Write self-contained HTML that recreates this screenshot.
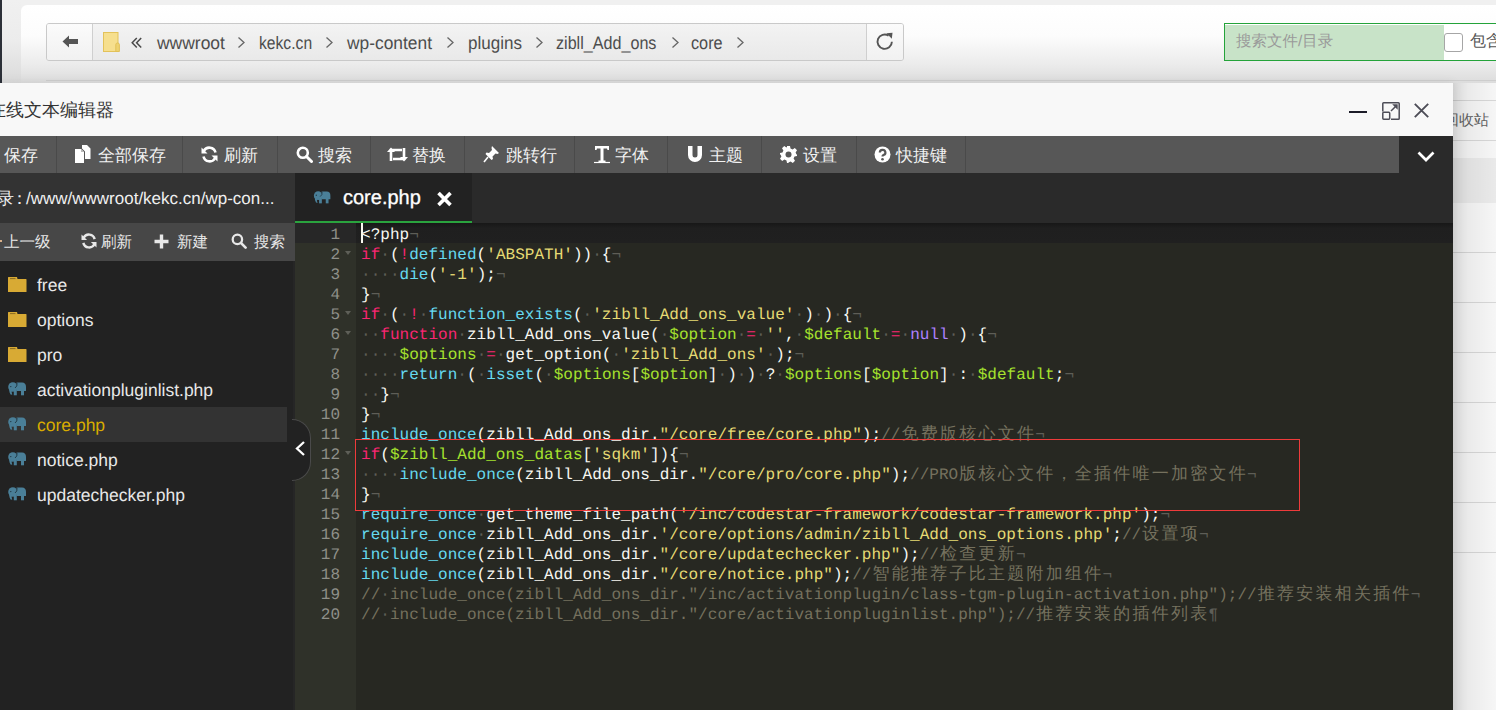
<!DOCTYPE html>
<html><head><meta charset="utf-8">
<style>
*{margin:0;padding:0;box-sizing:border-box}
html,body{width:1496px;height:710px;overflow:hidden;background:#f0f0f0;font-family:"Liberation Sans",sans-serif;position:relative;text-rendering:geometricPrecision}
.abs{position:absolute}
j{display:inline-block;width:1em;text-align:center}
/* page */
#lstrip{left:0;top:0;width:2px;height:83px;background:#2c3038}
#hdr{left:21px;top:5px;width:1500px;height:78px;background:linear-gradient(#fff 0%,#fcfcfc 40%,#ececec 75%,#dcdcdc 100%);border-top-left-radius:6px}
#hline{left:46px;top:80px;width:1500px;height:1px;background:#cdcdcd}
#pgl{left:2px;top:0;width:19px;height:83px;background:linear-gradient(#f0f0f0 0%,#ececec 50%,#dadada 100%)}
#addr{left:46px;top:23px;width:858px;height:38px;border:1px solid #c9c9c9;border-radius:3px;background:linear-gradient(#f3f3f3,#e9e9e9);overflow:hidden}
#back{left:0;top:0;width:46px;height:36px;background:linear-gradient(#fbfbfb,#f1f1f1);border-right:1px solid #cfcfcf}
#refr{right:0;top:0;width:37px;height:36px;background:linear-gradient(#fbfbfb,#f1f1f1);border-left:1px solid #cfcfcf}
.bc{position:absolute;top:8px;font-size:18px;color:#4d4d4d;line-height:20px;white-space:nowrap}
.gt{position:absolute;top:10px;width:7px;height:16px}
#search{left:1224px;top:23px;width:300px;height:38px;border:1px solid #24a33a;background:#fff}
#sfill{left:0;top:1px;width:219px;height:35px;background:#c8e3c8}
#sph{left:11px;top:8px;font-size:15.5px;color:#9a9a9a;line-height:20px}
#chk{left:219px;top:9px;width:19px;height:19px;border:1px solid #a6a6a6;border-radius:3px;background:#fff}
#chkl{left:245px;top:8px;font-size:16px;color:#555;line-height:20px}
/* right page */
#rpage{left:1453px;top:83px;width:60px;height:640px;background:#fcfcfc}
.rl{position:absolute;left:0;width:60px;height:1px;background:#dcdcdc}
#dlg{left:-20px;top:83px;width:1473px;height:640px;background:#f8f8f8;box-shadow:0 0 10px rgba(0,0,0,.08)}
#title{left:8px;top:99px;font-size:18px;color:#333;line-height:22px;white-space:nowrap}
#tb{left:0;top:136px;width:1399px;height:37px;background:#575757}
#tbr{left:1399px;top:136px;width:54px;height:37px;background:#2a2a2a}
.sep{position:absolute;top:0;width:1px;height:37px;background:#4a4a4a}
.tbi{position:absolute;top:8px;font-size:17px;line-height:20px;color:#f2f2f2;white-space:nowrap}
#lp{left:0;top:173px;width:295px;height:540px;background:#222}
#path{left:0;top:173px;width:295px;height:50px;background:#333}
#sub{left:0;top:223px;width:295px;height:38px;background:#474747}
#lsep{left:293px;top:261px;width:2px;height:540px;background:#262626}
#tabs{left:295px;top:173px;width:1158px;height:50px;background:#2a2a2a}
#tab{left:295px;top:173px;width:177px;height:50px;background:#222;border-bottom:2px solid #2aa33e}
#ed{left:295px;top:223px;width:1158px;height:490px;background:#272822}
#gut{left:295px;top:223px;width:61px;height:490px;background:#2f3129}
#actg{left:295px;top:223px;width:61px;height:20px;background:#272727}
#actl{left:356px;top:223px;width:1097px;height:20px;background:linear-gradient(#171717,#1f1f1f 5px,#202020)}
#code{left:361px;top:223px;font-family:"Liberation Mono",monospace;font-size:16px;letter-spacing:0.03px;line-height:20px;color:#f8f8f2;white-space:pre}
.ln{height:20px;padding-top:2px}
#gutn{left:295px;top:223px;width:45px;font-family:"Liberation Mono",monospace;font-size:16px;line-height:20px;color:#8f908a;text-align:right}
.gn{height:20px;padding-top:2px;position:relative}
.gn u{position:absolute;left:50px;top:8px;width:0;height:0;border-left:3.5px solid transparent;border-right:3.5px solid transparent;border-top:4.5px solid #5e5f58}
#code i{font-style:normal;color:#5e5e57}
#code .k{color:#f92672}
#code .f{color:#66d9ef}
#code .s{color:#e6db74}
#code .v{color:#a6e22e}
#code .c{color:#ae81ff}
#code .m{color:#75715e}
#code .m i{color:#5e5e57}
.cj{display:inline-block;width:19.26px;text-align:center;font-weight:normal;font-size:17px;line-height:18px}
#cursor{left:361px;top:223px;width:2px;height:20px;background:#f8f8f0}
#redbox{left:355px;top:439px;width:945px;height:72px;border:1px solid #ee3b3b}
.file{position:absolute;left:37px;font-size:17.5px;color:#e8e8e8;line-height:20px;white-space:nowrap}
</style></head><body>
<div id="lstrip" class="abs"></div>
<div id="pgl" class="abs"></div><div id="hdr" class="abs"></div><div id="hline" class="abs"></div>
<div id="addr" class="abs">
  <div id="back" class="abs"></div>
  <div id="refr" class="abs"></div>
</div>
<!-- back arrow -->
<svg class="abs" style="left:62px;top:34px" width="17" height="15" viewBox="0 0 17 15"><path d="M0.5 7.5 L7 1.5 L7 5 L16 5 L16 10 L7 10 L7 13.5 Z" fill="#555"/></svg>
<!-- folder -->
<svg class="abs" style="left:103px;top:32px" width="18" height="21" viewBox="0 0 18 21"><rect x="0.5" y="0.5" width="14.5" height="19" fill="#f6df8e" stroke="#e3c25a"/><path d="M12.8 19.5 V12.6 Q12.8 11 14.6 11 Q16.4 11 16.4 12.6 V19.5 Z" fill="#eed271" stroke="#e0be52" stroke-width="0.9"/></svg>
<svg class="abs" style="left:131px;top:37px" width="12" height="12" viewBox="0 0 12 12"><path d="M5.8 1 L1.2 5.8 L5.8 10.6 M10.2 1 L5.6 5.8 L10.2 10.6" fill="none" stroke="#4a4a4a" stroke-width="1.5"/></svg>
<div class="bc" style="left:157px;top:33px;transform:scaleX(.97);transform-origin:0 0">wwwroot</div>
<div class="bc" style="left:259px;top:33px;transform:scaleX(.87);transform-origin:0 0">kekc.cn</div>
<div class="bc" style="left:347px;top:33px;transform:scaleX(.965);transform-origin:0 0">wp-content</div>
<div class="bc" style="left:468px;top:33px;transform:scaleX(.946);transform-origin:0 0">plugins</div>
<div class="bc" style="left:556px;top:33px;transform:scaleX(.896);transform-origin:0 0">zibll_Add_ons</div>
<div class="bc" style="left:691px;top:33px;transform:scaleX(.902);transform-origin:0 0">core</div>
<svg class="abs" style="left:237px;top:36px" width="9" height="13"><path d="M1.5 1.5 L7 6.5 L1.5 11.5" fill="none" stroke="#666" stroke-width="1.3"/></svg>
<svg class="abs" style="left:325px;top:36px" width="9" height="13"><path d="M1.5 1.5 L7 6.5 L1.5 11.5" fill="none" stroke="#666" stroke-width="1.3"/></svg>
<svg class="abs" style="left:446px;top:36px" width="9" height="13"><path d="M1.5 1.5 L7 6.5 L1.5 11.5" fill="none" stroke="#666" stroke-width="1.3"/></svg>
<svg class="abs" style="left:535px;top:36px" width="9" height="13"><path d="M1.5 1.5 L7 6.5 L1.5 11.5" fill="none" stroke="#666" stroke-width="1.3"/></svg>
<svg class="abs" style="left:671px;top:36px" width="9" height="13"><path d="M1.5 1.5 L7 6.5 L1.5 11.5" fill="none" stroke="#666" stroke-width="1.3"/></svg>
<svg class="abs" style="left:736px;top:36px" width="9" height="13"><path d="M1.5 1.5 L7 6.5 L1.5 11.5" fill="none" stroke="#666" stroke-width="1.3"/></svg>
<!-- refresh icon -->
<svg class="abs" style="left:875px;top:32px" width="20" height="20" viewBox="0 0 20 20"><path d="M16.9 9.8 A7.2 7.2 0 1 1 13.6 3.6" fill="none" stroke="#555" stroke-width="1.9"/><path d="M11.5 1.2 L17.5 0.8 L16.8 6.8 Z" fill="#555"/></svg>
<div id="search" class="abs">
  <div id="sfill" class="abs"></div>
  <div id="sph" class="abs"><j>搜</j><j>索</j><j>文</j><j>件</j>/<j>目</j><j>录</j></div>
  <div id="chk" class="abs"></div>
  <div id="chkl" class="abs"><j>包</j><j>含</j></div>
</div>

<div id="rpage" class="abs">
  <div class="rl" style="top:17px"></div>
  <div class="rl" style="top:57px"></div>
  <div class="abs" style="left:0;top:75px;width:60px;height:45px;background:#efefef"></div>
  <div class="rl" style="top:169px"></div>
  <div class="rl" style="top:219px"></div>
  <div class="rl" style="top:269px"></div>
  <div class="rl" style="top:319px"></div>
  <div class="rl" style="top:369px"></div>
  <div class="rl" style="top:419px"></div>
  <div class="rl" style="top:469px"></div>
  <div class="abs" style="left:-9px;top:28px;font-size:15px;color:#666;line-height:20px;white-space:nowrap"><j>回</j><j>收</j><j>站</j></div>
</div>
<div class="abs" style="left:1453px;top:83px;width:50px;height:640px;background:linear-gradient(90deg,rgba(0,0,0,.15),rgba(0,0,0,.07) 30%,rgba(0,0,0,.01))"></div>

<div id="dlg" class="abs"></div>
<div id="title" class="abs" style="left:-12px"><j>在</j><j>线</j><j>文</j><j>本</j><j>编</j><j>辑</j><j>器</j></div>
<!-- window controls -->
<div class="abs" style="left:1349px;top:111px;width:18px;height:2px;background:#1c1c28"></div>
<svg class="abs" style="left:1381px;top:101px" width="20" height="20" viewBox="0 0 20 20"><path d="M1.8 10.5 V2.6 Q1.8 1.8 2.6 1.8 H17.4 Q18.2 1.8 18.2 2.6 V17.4 Q18.2 18.2 17.4 18.2 H10" fill="none" stroke="#4d4d57" stroke-width="1.5"/><rect x="1.8" y="11.3" width="6.9" height="6.9" rx="0.9" fill="none" stroke="#4d4d57" stroke-width="1.5"/><path d="M10 10 L14.8 5.2" stroke="#4d4d57" stroke-width="1.5"/><path d="M11.2 3.3 H16.7 V8.8 Z" fill="#4d4d57"/></svg>
<svg class="abs" style="left:1413px;top:102px" width="17" height="17" viewBox="0 0 17 17"><path d="M1.8 1.8 L15.2 15.2 M15.2 1.8 L1.8 15.2" stroke="#4d4d57" stroke-width="1.9"/></svg>

<div id="tb" class="abs">
  <div class="sep" style="left:56px"></div>
  <div class="sep" style="left:182px"></div>
  <div class="sep" style="left:277px"></div>
  <div class="sep" style="left:370px"></div>
  <div class="sep" style="left:464px"></div>
  <div class="sep" style="left:574px"></div>
  <div class="sep" style="left:667px"></div>
  <div class="sep" style="left:761px"></div>
  <div class="sep" style="left:856px"></div>
  <div class="sep" style="left:965px"></div>
</div>
<div id="tbr" class="abs"></div>
<svg class="abs" style="left:1416px;top:150px" width="20" height="14" viewBox="0 0 20 14"><path d="M2.5 2.5 L10 10 L17.5 2.5" fill="none" stroke="#fff" stroke-width="2.7"/></svg>
<!-- toolbar labels -->
<div class="tbi" style="left:4px;top:146px"><j>保</j><j>存</j></div>
<div class="tbi" style="left:98px;top:146px"><j>全</j><j>部</j><j>保</j><j>存</j></div>
<div class="tbi" style="left:224px;top:146px"><j>刷</j><j>新</j></div>
<div class="tbi" style="left:318px;top:146px"><j>搜</j><j>索</j></div>
<div class="tbi" style="left:412px;top:146px"><j>替</j><j>换</j></div>
<div class="tbi" style="left:506px;top:146px"><j>跳</j><j>转</j><j>行</j></div>
<div class="tbi" style="left:615px;top:146px"><j>字</j><j>体</j></div>
<div class="tbi" style="left:709px;top:146px"><j>主</j><j>题</j></div>
<div class="tbi" style="left:803px;top:146px"><j>设</j><j>置</j></div>
<div class="tbi" style="left:896px;top:146px"><j>快</j><j>捷</j><j>键</j></div>
<!-- toolbar icons -->
<svg class="abs" style="left:75px;top:145px" width="16" height="19" viewBox="0 0 16 19"><path d="M0 4 H6 L9 7 V18 H0 Z" fill="#fff"/><path d="M6 4 L6 7 L9 7" fill="#bbb"/><path d="M7 0 H12 L15.5 3.5 V14 H10 V6.5 L7 3.5 Z" fill="#fff"/></svg>
<svg class="abs" style="left:201px;top:146px" width="17" height="17" viewBox="0 0 17 17"><path d="M14.5 6.5 A6.3 6.3 0 0 0 2.8 5" fill="none" stroke="#fff" stroke-width="2.6"/><path d="M0.5 1.5 L0.5 7.5 L6.5 7.5 Z" fill="#fff"/><path d="M2.5 10.5 A6.3 6.3 0 0 0 14.2 12" fill="none" stroke="#fff" stroke-width="2.6"/><path d="M16.5 15.5 L16.5 9.5 L10.5 9.5 Z" fill="#fff"/></svg>
<svg class="abs" style="left:296px;top:146px" width="17" height="17" viewBox="0 0 17 17"><circle cx="6.8" cy="6.8" r="5" fill="none" stroke="#fff" stroke-width="2.6"/><path d="M10.5 10.5 L15.5 15.5" stroke="#fff" stroke-width="3" stroke-linecap="round"/></svg>
<svg class="abs" style="left:387px;top:147px" width="21" height="15" viewBox="0 0 21 15"><path d="M4 14 V3 H15" fill="none" stroke="#fff" stroke-width="2.6"/><path d="M0 5 L4 0.5 L8 5 Z" fill="#fff"/><path d="M17 1 V12 H6" fill="none" stroke="#fff" stroke-width="2.6"/><path d="M13 10 L17 14.5 L21 10 Z" fill="#fff"/></svg>
<svg class="abs" style="left:483px;top:145px" width="17" height="18" viewBox="0 0 17 18"><path d="M9 1 L16 8 L14.5 9 L12.5 8.5 L9.5 11.5 L10 14 L8.5 15 L2.5 9 L3.5 7.5 L6 8 L9 5 L8.5 3 Z" fill="#fff"/><path d="M5 12 L1 17" stroke="#fff" stroke-width="1.6"/></svg>
<svg class="abs" style="left:594px;top:145px" width="16" height="19" viewBox="0 0 16 19"><path d="M1 1 H15 V5 H13.5 L13 3.5 H9.5 V15.5 H11.5 V17.5 H4.5 V15.5 H6.5 V3.5 H3 L2.5 5 H1 Z" fill="#fff"/><path d="M0 17.5 H16" stroke="#fff" stroke-width="1.2"/></svg>
<svg class="abs" style="left:687px;top:146px" width="16" height="17" viewBox="0 0 16 17"><path d="M1 0 H5.5 V9 A2.5 2.5 0 0 0 10.5 9 V0 H15 V9 A7 7 0 0 1 1 9 Z" fill="#fff"/><rect x="1" y="0" width="4.5" height="3.5" fill="#575757" opacity="0"/></svg>
<svg class="abs" style="left:780px;top:146px" width="17" height="17" viewBox="0 0 17 17"><path d="M7 0 H10 L10.5 2.5 L12.6 3.4 L14.8 2 L17 4.2 L15.6 6.4 L16.5 8.5 L17 8.5 V10 L14.5 10.5 L13.6 12.6 L15 14.8 L12.8 17 L10.6 15.6 L8.5 16.5 V17 H7 L6.5 14.5 L4.4 13.6 L2.2 15 L0 12.8 L1.4 10.6 L0.5 8.5 L0 8.5 V7 L2.5 6.5 L3.4 4.4 L2 2.2 L4.2 0 L6.4 1.4 L7 1 Z" fill="#fff"/><circle cx="8.5" cy="8.5" r="3" fill="#575757"/></svg>
<svg class="abs" style="left:874px;top:146px" width="17" height="17" viewBox="0 0 17 17"><circle cx="8.5" cy="8.5" r="8" fill="#fff"/><path d="M5.8 6.5 A2.8 2.6 0 1 1 9.5 9 Q8.5 9.5 8.5 10.5" fill="none" stroke="#575757" stroke-width="2.2"/><circle cx="8.5" cy="13.2" r="1.3" fill="#575757"/></svg>

<!-- left panel -->
<div id="lp" class="abs"></div>
<div id="path" class="abs"></div>
<div class="abs" style="left:-3px;top:188px;font-size:17px;color:#f0f0f0;line-height:22px;white-space:nowrap"><j>录</j><span style="margin:0 -2px 0 -3px"><j>：</j></span>/www/wwwroot/kekc.cn/wp-con...</div>
<div id="sub" class="abs"></div>
<div class="abs" style="left:4px;top:233px;font-size:15.5px;color:#e8e8e8;line-height:20px;white-space:nowrap"><j>上</j><j>一</j><j>级</j></div>
<div class="abs" style="left:101px;top:233px;font-size:15.5px;color:#e8e8e8;line-height:20px;white-space:nowrap"><j>刷</j><j>新</j></div>
<div class="abs" style="left:177px;top:233px;font-size:15.5px;color:#e8e8e8;line-height:20px;white-space:nowrap"><j>新</j><j>建</j></div>
<div class="abs" style="left:254px;top:233px;font-size:15.5px;color:#e8e8e8;line-height:20px;white-space:nowrap"><j>搜</j><j>索</j></div>
<svg class="abs" style="left:81px;top:233px" width="16" height="16" viewBox="0 0 17 17"><path d="M14.5 6.5 A6.3 6.3 0 0 0 2.8 5" fill="none" stroke="#e8e8e8" stroke-width="2.6"/><path d="M0.5 1.5 L0.5 7.5 L6.5 7.5 Z" fill="#e8e8e8"/><path d="M2.5 10.5 A6.3 6.3 0 0 0 14.2 12" fill="none" stroke="#e8e8e8" stroke-width="2.6"/><path d="M16.5 15.5 L16.5 9.5 L10.5 9.5 Z" fill="#e8e8e8"/></svg>
<svg class="abs" style="left:154px;top:234px" width="15" height="15" viewBox="0 0 15 15"><path d="M7.5 0.5 V14.5 M0.5 7.5 H14.5" stroke="#e8e8e8" stroke-width="3.4"/></svg>
<svg class="abs" style="left:231px;top:233px" width="16" height="16" viewBox="0 0 17 17"><circle cx="6.8" cy="6.8" r="5" fill="none" stroke="#e8e8e8" stroke-width="2.4"/><path d="M10.5 10.5 L15.5 15.5" stroke="#e8e8e8" stroke-width="2.8" stroke-linecap="round"/></svg>
<div class="abs" style="left:0;top:240px;width:2px;height:2px;background:#d8b08a"></div>

<div class="abs" style="left:0;top:407px;width:287px;height:35px;background:#333"></div>
<div class="file" style="top:275px">free</div>
<div class="file" style="top:310px">options</div>
<div class="file" style="top:345px">pro</div>
<div class="file" style="top:380px">activationpluginlist.php</div>
<div class="file" style="top:415px;color:#d9ac00">core.php</div>
<div class="file" style="top:450px">notice.php</div>
<div class="file" style="top:485px">updatechecker.php</div>
<!-- folder icons -->
<svg class="abs" style="left:8px;top:277px" width="19" height="15" viewBox="0 0 19 15"><path d="M0 0.5 Q0 0 0.5 0 H9 L9.5 2 H18 Q18.5 2 18.5 2.5 V15 H0 Z" fill="#d8aa34"/><path d="M2 1.6 H7.5" stroke="#8a6a20" stroke-width="1"/></svg>
<svg class="abs" style="left:8px;top:312px" width="19" height="15" viewBox="0 0 19 15"><path d="M0 0.5 Q0 0 0.5 0 H9 L9.5 2 H18 Q18.5 2 18.5 2.5 V15 H0 Z" fill="#d8aa34"/><path d="M2 1.6 H7.5" stroke="#8a6a20" stroke-width="1"/></svg>
<svg class="abs" style="left:8px;top:347px" width="19" height="15" viewBox="0 0 19 15"><path d="M0 0.5 Q0 0 0.5 0 H9 L9.5 2 H18 Q18.5 2 18.5 2.5 V15 H0 Z" fill="#d8aa34"/><path d="M2 1.6 H7.5" stroke="#8a6a20" stroke-width="1"/></svg>
<!-- elephants -->
<svg class="abs eleph" style="left:8px;top:382px" width="19" height="14" viewBox="0 0 19 14"><use href="#el"/></svg>
<svg class="abs eleph" style="left:8px;top:417px" width="19" height="14" viewBox="0 0 19 14"><use href="#el"/></svg>
<svg class="abs eleph" style="left:8px;top:452px" width="19" height="14" viewBox="0 0 19 14"><use href="#el"/></svg>
<svg class="abs eleph" style="left:8px;top:487px" width="19" height="14" viewBox="0 0 19 14"><use href="#el"/></svg>
<svg width="0" height="0" style="position:absolute"><defs><g id="el"><ellipse cx="4.8" cy="5" rx="4.6" ry="4.8" fill="#4a7f98"/><path d="M8.6 0.6 H14 Q18 0.8 18 5 V8.5 Q18 9 17.5 9 H8.5 Z" fill="#4a7f98"/><rect x="5.8" y="6" width="3" height="7.3" fill="#4a7f98"/><rect x="13" y="6" width="3" height="7.3" fill="#4a7f98"/><path d="M1.2 6.5 Q1 10 2.5 12.5 L4.2 12.8 Q3.2 10.5 3.8 8" fill="#4a7f98"/><path d="M9 0.8 Q9.6 4.5 7 6" fill="none" stroke="#1f3440" stroke-width="0.9"/><circle cx="2.8" cy="4.6" r="0.7" fill="#1f3440"/></g></defs></svg>
<div id="lsep" class="abs"></div>

<!-- tabs -->
<div id="tabs" class="abs"></div>
<div id="tab" class="abs"></div>
<svg class="abs eleph" style="left:313px;top:191px" width="19" height="13" viewBox="0 0 19 14"><use href="#el"/></svg>
<div class="abs" style="left:343px;top:186px;font-size:20px;color:#fff;line-height:24px;white-space:nowrap;-webkit-text-stroke:0.3px #fff">core.php</div>
<svg class="abs" style="left:436px;top:191px" width="17" height="16" viewBox="0 0 17 16"><path d="M2.5 2 L14.5 14 M14.5 2 L2.5 14" stroke="#fff" stroke-width="3.6"/></svg>

<!-- editor -->
<div id="ed" class="abs"></div>
<div id="gut" class="abs"></div>
<div id="actg" class="abs"></div>
<div id="actl" class="abs"></div>
<div id="gutn" class="abs"><div class="gn">1</div><div class="gn">2<u></u></div><div class="gn">3</div><div class="gn">4</div><div class="gn">5<u></u></div><div class="gn">6<u></u></div><div class="gn">7</div><div class="gn">8</div><div class="gn">9</div><div class="gn">10</div><div class="gn">11</div><div class="gn">12<u></u></div><div class="gn">13</div><div class="gn">14</div><div class="gn">15</div><div class="gn">16</div><div class="gn">17</div><div class="gn">18</div><div class="gn">19</div><div class="gn">20</div></div>
<div id="code" class="abs"><div class="ln">&lt;?php<i>¬</i></div><div class="ln"><span class="k">if</span><i>·</i>(<span class="k">!</span><span class="f">defined</span>(<span class="s">'ABSPATH'</span>))<i>·</i>{<i>¬</i></div><div class="ln"><i>·</i><i>·</i><i>·</i><i>·</i><span class="f">die</span>(<span class="s">'-1'</span>);<i>¬</i></div><div class="ln">}<i>¬</i></div><div class="ln"><span class="k">if</span><i>·</i>(<i>·</i><span class="k">!</span><i>·</i><span class="f">function_exists</span>(<i>·</i><span class="s">'zibll_Add_ons_value'</span><i>·</i>)<i>·</i>)<i>·</i>{<i>¬</i></div><div class="ln"><i>·</i><i>·</i><span class="k">function</span><i>·</i>zibll_Add_ons_value(<i>·</i><span class="v">$option</span><i>·</i><span class="k">=</span><i>·</i><span class="s">''</span>,<i>·</i><span class="v">$default</span><i>·</i><span class="k">=</span><i>·</i><span class="c">null</span><i>·</i>)<i>·</i>{<i>¬</i></div><div class="ln"><i>·</i><i>·</i><i>·</i><i>·</i><span class="v">$options</span><i>·</i><span class="k">=</span><i>·</i>get_option(<i>·</i><span class="s">'zibll_Add_ons'</span><i>·</i>);<i>¬</i></div><div class="ln"><i>·</i><i>·</i><i>·</i><i>·</i><span class="f">return</span><i>·</i>(<i>·</i><span class="f">isset</span>(<i>·</i><span class="v">$options</span>[<span class="v">$option</span>]<i>·</i>)<i>·</i>)<i>·</i>?<i>·</i><span class="v">$options</span>[<span class="v">$option</span>]<i>·</i>:<i>·</i><span class="v">$default</span>;<i>¬</i></div><div class="ln"><i>·</i><i>·</i>}<i>¬</i></div><div class="ln">}<i>¬</i></div><div class="ln"><span class="f">include_once</span>(zibll_Add_ons_dir.<span class="s">"/core/free/core.php"</span>);<span class="m">//<b class="cj">免</b><b class="cj">费</b><b class="cj">版</b><b class="cj">核</b><b class="cj">心</b><b class="cj">文</b><b class="cj">件</b></span><i>¬</i></div><div class="ln"><span class="k">if</span>(<span class="v">$zibll_Add_ons_datas</span>[<span class="s">'sqkm'</span>]){<i>¬</i></div><div class="ln"><i>·</i><i>·</i><i>·</i><i>·</i><span class="f">include_once</span>(zibll_Add_ons_dir.<span class="s">"/core/pro/core.php"</span>);<span class="m">//PRO<b class="cj">版</b><b class="cj">核</b><b class="cj">心</b><b class="cj">文</b><b class="cj">件</b><b class="cj">，</b><b class="cj">全</b><b class="cj">插</b><b class="cj">件</b><b class="cj">唯</b><b class="cj">一</b><b class="cj">加</b><b class="cj">密</b><b class="cj">文</b><b class="cj">件</b></span><i>¬</i></div><div class="ln">}<i>¬</i></div><div class="ln"><span class="f">require_once</span><i>·</i>get_theme_file_path(<span class="s">'/inc/codestar-framework/codestar-framework.php'</span>);<i>¬</i></div><div class="ln"><span class="f">require_once</span><i>·</i>zibll_Add_ons_dir.<span class="s">'/core/options/admin/zibll_Add_ons_options.php'</span>;<span class="m">//<b class="cj">设</b><b class="cj">置</b><b class="cj">项</b></span><i>¬</i></div><div class="ln"><span class="f">include_once</span>(zibll_Add_ons_dir.<span class="s">"/core/updatechecker.php"</span>);<span class="m">//<b class="cj">检</b><b class="cj">查</b><b class="cj">更</b><b class="cj">新</b></span><i>¬</i></div><div class="ln"><span class="f">include_once</span>(zibll_Add_ons_dir.<span class="s">"/core/notice.php"</span>);<span class="m">//<b class="cj">智</b><b class="cj">能</b><b class="cj">推</b><b class="cj">荐</b><b class="cj">子</b><b class="cj">比</b><b class="cj">主</b><b class="cj">题</b><b class="cj">附</b><b class="cj">加</b><b class="cj">组</b><b class="cj">件</b></span><i>¬</i></div><div class="ln"><span class="m">//<i>·</i>include_once(zibll_Add_ons_dir."/inc/activationplugin/class-tgm-plugin-activation.php");//<b class="cj">推</b><b class="cj">荐</b><b class="cj">安</b><b class="cj">装</b><b class="cj">相</b><b class="cj">关</b><b class="cj">插</b><b class="cj">件</b></span><i>¬</i></div><div class="ln"><span class="m">//<i>·</i>include_once(zibll_Add_ons_dir."/core/activationpluginlist.php");//<b class="cj">推</b><b class="cj">荐</b><b class="cj">安</b><b class="cj">装</b><b class="cj">的</b><b class="cj">插</b><b class="cj">件</b><b class="cj">列</b><b class="cj">表</b></span><i>¶</i></div></div>
<div id="cursor" class="abs"></div>
<div id="redbox" class="abs"></div>
<!-- collapse tab -->
<div class="abs" style="left:292px;top:419px;width:19px;height:62px;background:#222;border:1px solid #4a4a4a;border-left:none;border-radius:0 19px 19px 0"></div>
<svg class="abs" style="left:294px;top:440px" width="13" height="17" viewBox="0 0 13 17"><path d="M10 2 L3 8.5 L10 15" fill="none" stroke="#fff" stroke-width="2.3"/></svg>
</body></html>
